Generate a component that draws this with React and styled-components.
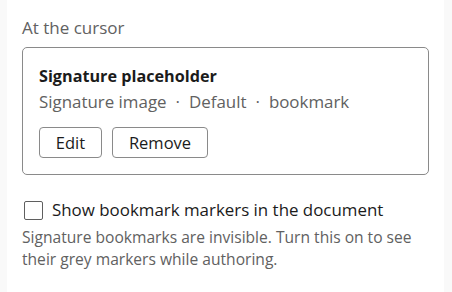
import React from "react";
import styled, { createGlobalStyle } from "styled-components";

const Global = createGlobalStyle`
  html, body { margin: 0; padding: 0; background: #f9f9f9; }
  body { font-family: "Open Sans", "Noto Sans", sans-serif; }
`;

const Panel = styled.div`
  margin: 0 8px 0 7px;
  background: #ffffff;
  min-height: 292px;
  box-sizing: border-box;
  padding: 17px 15px 0 15px;
`;

const SectionLabel = styled.div`
  font-size: 17px;
  line-height: 22px;
  color: #616161;
  margin-bottom: 8px;
`;

const Card = styled.div`
  border: 1px solid #8a8a8a;
  border-radius: 5px;
  padding: 17px 16px 16px 16px;
`;

const Title = styled.div`
  font-size: 16.2px;
  font-weight: 700;
  line-height: 22px;
  color: #1b1b1b;
`;

const Meta = styled.div`
  font-size: 16.9px;
  line-height: 24px;
  color: #616161;
  margin-top: 3px;
  white-space: nowrap;
`;

const Dot = styled.span`
  margin: 0 9px;
`;

const Actions = styled.div`
  display: flex;
  gap: 10px;
  margin-top: 13px;
`;

const Button = styled.button`
  font-family: inherit;
  font-size: 16.5px;
  color: #1b1b1b;
  background: #fff;
  border: 1px solid #8a8a8a;
  border-radius: 4px;
  height: 31px;
  width: ${(p) => p.$w}px;
  padding: 0;
  box-sizing: border-box;
`;

const CheckRow = styled.label`
  display: flex;
  align-items: center;
  gap: 9px;
  margin-top: 24px;
  font-size: 16.9px;
  line-height: 22px;
  color: #1b1b1b;
  white-space: nowrap;
`;

const Box = styled.span`
  width: 19px;
  height: 19px;
  box-sizing: border-box;
  border: 1px solid #5f5f5f;
  border-radius: 2px;
  margin-left: 2px;
  background: #fff;
  flex: none;
`;

const Help = styled.div`
  font-size: 15.6px;
  line-height: 22px;
  color: #616161;
  margin-top: 5px;
  white-space: nowrap;
`;

export default function App() {
  return (
    <>
      <Global />
      <Panel>
        <SectionLabel>At the cursor</SectionLabel>
        <Card>
          <Title>Signature placeholder</Title>
          <Meta>
            Signature image<Dot>·</Dot>Default<Dot>·</Dot>bookmark
          </Meta>
          <Actions>
            <Button $w={63}>Edit</Button>
            <Button $w={96}>Remove</Button>
          </Actions>
        </Card>
        <CheckRow>
          <Box />
          Show bookmark markers in the document
        </CheckRow>
        <Help>
          Signature bookmarks are invisible. Turn this on to see
          <br />
          their grey markers while authoring.
        </Help>
      </Panel>
    </>
  );
}
